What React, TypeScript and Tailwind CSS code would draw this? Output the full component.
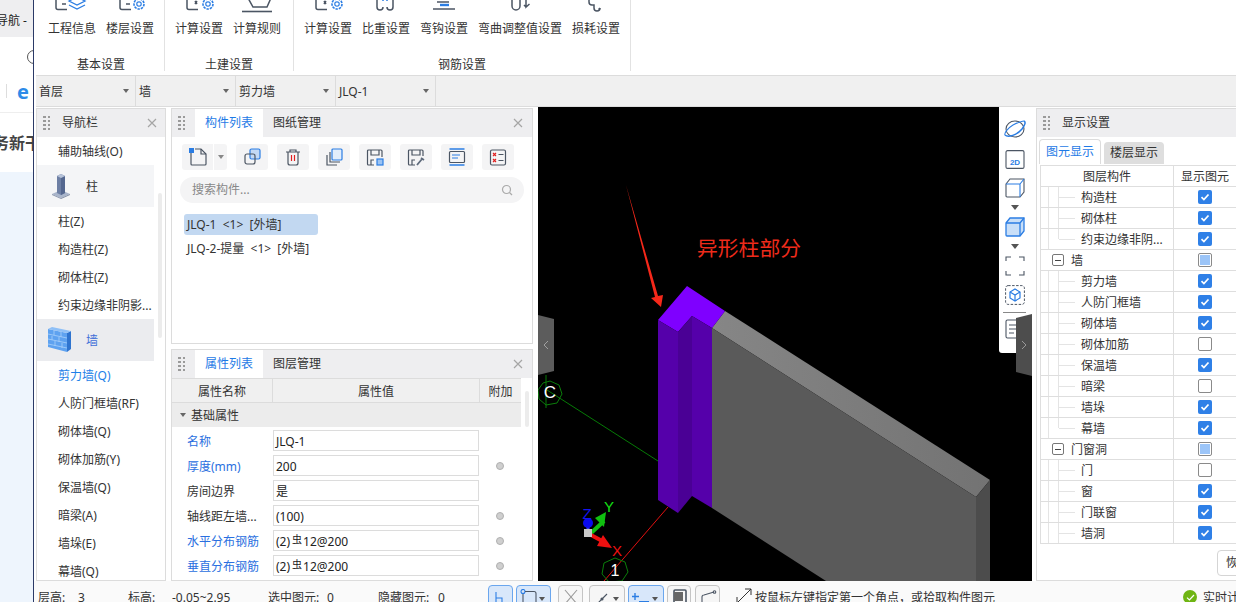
import React from "react";

const GRAY = "#4b5563";
const BLUE = "#2b7de3";

function Gear({ x, y }: { x: number; y: number }) {
  return (
    <g transform={`translate(${x} ${y})`} fill="none" stroke={BLUE}>
      <circle r="5" strokeWidth="1.6" strokeDasharray="2.4 1" />
      <circle r="2.2" strokeWidth="1.2" />
    </g>
  );
}

function DocL({ x, mark }: { x: number; mark?: boolean }) {
  return (
    <g fill="none" stroke={GRAY} strokeWidth="1.5">
      <path d={`M${x} -2V7.5a2 2 0 0 0 2 2h9`} />
      {mark ? <path d={`M${x + 8} 1l2 3M${x + 10} 1l-2 3`} /> : <path d={`M${x + 6} 4h4`} />}
    </g>
  );
}

function RibbonIcon({ kind }: { kind: number }) {
  return (
    <svg width="36" height="20" viewBox="0 0 36 20" className="block overflow-hidden">
      {kind === 0 && (
        <g>
          <DocL x={2} />
          <g fill="none" stroke={BLUE} strokeWidth="1.3">
            <path d="M15 1l8 -4 8 4-8 4z" />
            <path d="M15 5l8 4 8-4" />
          </g>
        </g>
      )}
      {kind === 1 && (
        <g>
          <DocL x={8} />
          <Gear x={27} y={4} />
        </g>
      )}
      {kind === 2 && (
        <g>
          <DocL x={6} mark />
          <Gear x={27} y={4} />
        </g>
      )}
      {kind === 3 && (
        <g fill="none" stroke={GRAY} strokeWidth="1.5">
          <path d="M9 -2l5 9h14l4-9" />
          <path d="M3 11.5h30" strokeWidth="1.6" />
        </g>
      )}
      {kind === 4 && (
        <g fill="none" stroke={GRAY} strokeWidth="1.5">
          <path d="M9 -2v9a3 3 0 0 0 6 0" />
          <path d="M25 -2v9a3 3 0 0 1-6 0" />
          <path d="M15 -2v3M19 -2v3" stroke={BLUE} />
        </g>
      )}
      {kind === 5 && (
        <g fill="none" strokeWidth="1.5">
          <path d="M7 9h22" stroke={GRAY} />
          <path d="M11 2h12" stroke={GRAY} />
          <path d="M14 5h9" stroke={BLUE} strokeWidth="2.4" />
        </g>
      )}
      {kind === 6 && (
        <g fill="none" stroke={GRAY} strokeWidth="1.5">
          <path d="M10 -2v8a4 4 0 0 0 8 0v-8" />
          <path d="M24 -2v9l3.5-3M24 7l-2-2" />
        </g>
      )}
      {kind === 7 && (
        <g fill="none" stroke={GRAY} strokeWidth="1.5">
          <path d="M11 -2v4a3 3 0 0 0 3 3h2v3a3 3 0 0 0 6 0" />
          <path d="M22 8l-1.5 1.5" />
        </g>
      )}
    </svg>
  );
}

const ribbon = [
  { title: "基本设置", cls: "w-[131px] pl-[14px]", items: [["工程信息", 0], ["楼层设置", 1]] },
  { title: "土建设置", cls: "w-[129px] pl-[10px]", items: [["计算设置", 2], ["计算规则", 3]] },
  {
    title: "钢筋设置",
    cls: "w-[337px] pl-[10px]",
    items: [["计算设置", 2], ["比重设置", 4], ["弯钩设置", 5], ["弯曲调整值设置", 6], ["损耗设置", 7]],
  },
];

function Ribbon() {
  return (
    <div className="flex h-[75px] shrink-0 bg-white">
      {ribbon.map((g) => (
        <div key={g.title} className={`flex h-[71px] shrink-0 flex-col border-r border-[#e2e2e2] ${g.cls}`}>
          <div className="flex gap-[10px]">
            {g.items.map(([label, kind], i) => (
              <div key={i} className="flex flex-col items-center">
                <RibbonIcon kind={kind as number} />
                <span className="mt-px h-[16px] whitespace-nowrap leading-[16px]">{label}</span>
              </div>
            ))}
          </div>
          <div className="mb-[-2px] mt-auto h-[16px] pr-[10px] text-center leading-[16px]">{g.title}</div>
        </div>
      ))}
    </div>
  );
}

function Selector() {
  return (
    <div className="ml-[2px] flex h-[32px] shrink-0 border-y border-[#dcdcdc] bg-[#f0f0f0]">
      {["首层", "墙", "剪力墙", "JLQ-1"].map((t) => (
        <div key={t} className="flex w-[100px] items-center justify-between border-r border-[#dcdcdc] pl-[3px] pr-[6px]">
          <span className="pt-[2px]">{t}</span>
          <span className="h-0 w-0 border-x-[3px] border-t-[4px] border-x-transparent border-t-[#666]" />
        </div>
      ))}
    </div>
  );
}

function Dots() {
  return (
    <div className="grid w-[7px] shrink-0 grid-cols-2 gap-x-[2px] gap-y-[1.5px]">
      {[0, 1, 2, 3, 4, 5, 6, 7].map((i) => (
        <span key={i} className="h-[2.5px] w-[2.5px] bg-[#9a9a9a]" />
      ))}
    </div>
  );
}

function Close() {
  return (
    <svg width="10" height="10" viewBox="0 0 10 10" className="ml-auto shrink-0">
      <path d="M1 1l8 8M9 1l-8 8" stroke="#a5a5a5" strokeWidth="1.2" />
    </svg>
  );
}

function NavRow({ t, blue }: { t: string; blue?: boolean }) {
  return <div className={`h-[28px] whitespace-nowrap pl-[21px] leading-[30px] ${blue ? "text-[#1e7fe8]" : ""}`}>{t}</div>;
}

function ColumnIcon() {
  return (
    <svg width="20" height="26" viewBox="0 0 20 26">
      <path d="M1 21l9-4 9 4-9 4z" fill="#a9b5cb" />
      <path d="M1 21l9 4v1l-9-4z" fill="#8b97ae" />
      <path d="M19 21l-9 4v1l9-4z" fill="#7f8ba3" />
      <path d="M6 3l4-2 4 2v17l-4 2-4-2z" fill="#6d7fa4" />
      <path d="M10 5l4-2v17l-4 2z" fill="#54678f" />
      <path d="M6 3l4-2 4 2-4 2z" fill="#b7c3d9" />
    </svg>
  );
}

function WallIcon() {
  return (
    <svg width="24" height="26" viewBox="0 0 24 26">
      <path d="M0 2l19 4v19L0 20z" fill="#5ea2f0" />
      <path d="M19 6l4-2v18l-4 3z" fill="#2f74cf" />
      <path d="M0 2l4-2 19 4-4 2z" fill="#8fc0f7" />
      <path d="M0 7l19 4M0 12l19 4M0 17l19 4M6 3v5M13 5v5M4 9v4M11 10v5M7 14v5M14 16v5" stroke="#a9d0fa" strokeWidth="0.8" fill="none" />
    </svg>
  );
}

function NavPanel() {
  return (
    <div className="mt-px flex w-[130px] shrink-0 flex-col overflow-hidden border border-[#dcdcdc] bg-white">
      <div className="flex h-[28px] shrink-0 items-center bg-[#eeeef0] pl-[6px] pr-[8px]">
        <Dots />
        <span className="ml-[12px]">导航栏</span>
        <Close />
      </div>
      <div className="flex min-h-0 flex-1 overflow-hidden">
        <div className="w-[117px] shrink-0">
          <NavRow t="辅助轴线(O)" />
          <div className="flex h-[42px] items-center bg-[#f4f5f7] pl-[14px]">
            <ColumnIcon />
            <span className="ml-[15px] pt-[2px]">柱</span>
          </div>
          <NavRow t="柱(Z)" />
          <NavRow t="构造柱(Z)" />
          <NavRow t="砌体柱(Z)" />
          <NavRow t="约束边缘非阴影..." />
          <div className="flex h-[42px] items-center bg-[#ebecef] pl-[11px]">
            <WallIcon />
            <span className="ml-[14px] pt-[2px] text-[#3f6fd8]">墙</span>
          </div>
          <NavRow t="剪力墙(Q)" blue />
          <NavRow t="人防门框墙(RF)" />
          <NavRow t="砌体墙(Q)" />
          <NavRow t="砌体加筋(Y)" />
          <NavRow t="保温墙(Q)" />
          <NavRow t="暗梁(A)" />
          <NavRow t="墙垛(E)" />
          <NavRow t="幕墙(Q)" />
        </div>
        <div className="ml-[4px] mt-[56px] h-[145px] w-[4px] rounded-full bg-[#ececec]" />
      </div>
    </div>
  );
}

function Tabs({ a, b }: { a: string; b: string }) {
  return (
    <div className="flex h-[28px] shrink-0 items-center bg-[#eeeef0] pl-[6px] pr-[9px]">
      <Dots />
      <span className="ml-[10px] flex h-full w-[68px] items-center justify-center bg-white text-[#1e7ae6]">{a}</span>
      <span className="ml-[10px]">{b}</span>
      <Close />
    </div>
  );
}

function ToolIcon({ kind }: { kind: number }) {
  return (
    <svg width="20" height="20" viewBox="0 0 20 20" fill="none" strokeWidth="1.2" stroke={GRAY}>
      {kind === 0 && (
        <g>
          <path d="M3 5v12a1 1 0 0 0 1 1h13a1 1 0 0 0 1-1V7l-5-5H7" />
          <path d="M13 2v5h5" />
          <path d="M1 1h5v5H1z" fill={BLUE} stroke="none" />
        </g>
      )}
      {kind === 1 && (
        <g>
          <rect x="8" y="2" width="10" height="10" rx="1.5" fill="#c3d9f5" stroke={BLUE} />
          <rect x="3" y="7" width="10" height="10" rx="2" />
        </g>
      )}
      {kind === 2 && (
        <g>
          <path d="M3 5h14M7 5V3h6v2M5 5v11a2 2 0 0 0 2 2h6a2 2 0 0 0 2-2V5" />
          <path d="M8.5 8v6M11.5 8v6" stroke="#e02020" />
        </g>
      )}
      {kind === 3 && (
        <g>
          <rect x="8" y="2" width="10" height="11" rx="1" fill="#e3eefb" stroke={BLUE} />
          <path d="M6 5v10h10M3 8v10h10" />
        </g>
      )}
      {kind === 4 && (
        <g>
          <path d="M17 10V4a1 1 0 0 0-1-1H3.5a1 1 0 0 0-1 1v13a1 1 0 0 0 1 1H9" />
          <path d="M6 3v5h8V3M6 18v-5h3" />
          <rect x="12" y="12" width="6" height="6" fill="#9cc3f2" stroke={BLUE} />
        </g>
      )}
      {kind === 5 && (
        <g>
          <path d="M17 9V4a1 1 0 0 0-1-1H3.5a1 1 0 0 0-1 1v13a1 1 0 0 0 1 1H9" />
          <path d="M6 3v5h8V3M6 18v-5h3" />
          <path d="M11 18l5-6M15 11l3 2" stroke="#5f6b7c" strokeWidth="1.8" />
        </g>
      )}
      {kind === 6 && (
        <g>
          <path d="M2.5 2h15M2.5 18h15" stroke={BLUE} strokeWidth="1.4" />
          <rect x="2.5" y="4.5" width="15" height="11" rx="1" />
          <path d="M5 8h8M5 11h6" stroke={BLUE} />
        </g>
      )}
      {kind === 7 && (
        <g>
          <rect x="2.5" y="3" width="15" height="15" rx="1.5" />
          <path d="M5 6l3 3M8 6l-3 3M5 12l3 3M8 12l-3 3" stroke="#e02020" />
          <path d="M10.5 7.5h5M10.5 13.5h5" />
        </g>
      )}
    </svg>
  );
}

function ComponentPanel() {
  return (
    <div className="mt-px flex h-[236px] shrink-0 flex-col border border-[#dcdcdc] bg-white">
      <Tabs a="构件列表" b="图纸管理" />
      <div className="ml-[10px] mt-[7px] flex h-[26px] gap-[9px]">
        <div className="flex w-[45px] overflow-hidden rounded-[3px] bg-[#f4f4f5]">
          <span className="flex w-[32px] items-center justify-center border-r border-white">
            <ToolIcon kind={0} />
          </span>
          <span className="flex flex-1 items-center justify-center">
            <span className="h-0 w-0 border-x-[3px] border-t-[4px] border-x-transparent border-t-[#888]" />
          </span>
        </div>
        {[1, 2, 3, 4, 5, 6, 7].map((k) => (
          <span key={k} className="flex w-[32px] items-center justify-center rounded-[3px] bg-[#f4f4f5]">
            <ToolIcon kind={k} />
          </span>
        ))}
      </div>
      <div className="mx-[8px] mt-[7px] flex h-[26px] items-center rounded-full bg-[#f4f4f5] pl-[12px] pr-[11px] text-[#888]">
        <span>搜索构件...</span>
        <svg width="12" height="12" viewBox="0 0 12 12" fill="none" stroke="#aaa" strokeWidth="1.2" className="ml-auto">
          <circle cx="5.5" cy="5.5" r="4" />
          <path d="M8.5 8.5l2.5 2.5" />
        </svg>
      </div>
      <div className="ml-[12px] mt-[11px] flex h-[21px] w-[134px] items-center whitespace-pre rounded-[3px] bg-[#c2d8f1] pl-[3px]">
        {"JLQ-1  <1>  [外墙]"}
      </div>
      <div className="ml-[15px] mt-[3px] h-[21px] whitespace-pre leading-[21px]">{"JLQ-2-提量  <1>  [外墙]"}</div>
    </div>
  );
}

const props: [string, string, boolean, boolean, boolean][] = [
  ["名称", "JLQ-1", true, false, false],
  ["厚度(mm)", "200", true, true, false],
  ["房间边界", "是", false, false, false],
  ["轴线距左墙...", "(100)", false, true, false],
  ["水平分布钢筋", "12@200", true, true, true],
  ["垂直分布钢筋", "12@200", true, true, true],
  ["", "", false, false, false],
];

function PropPanel() {
  return (
    <div className="mt-[5px] flex min-h-0 flex-1 flex-col overflow-hidden border border-[#dcdcdc] bg-white">
      <Tabs a="属性列表" b="图层管理" />
      <div className="flex min-h-0 flex-1 overflow-hidden">
        <div className="w-[349px] shrink-0">
          <div className="flex h-[25px] border-y border-[#dcdcdc] bg-[#f0f0f0] text-center leading-[25px]">
            <span className="w-[101px] border-r border-[#dcdcdc]">属性名称</span>
            <span className="w-[207px] border-r border-[#dcdcdc]">属性值</span>
            <span className="flex-1">附加</span>
          </div>
          <div className="flex h-[24px] items-center bg-[#ececec] pl-[8px]">
            <span className="h-0 w-0 border-x-[3px] border-t-[4px] border-x-transparent border-t-[#666]" />
            <span className="ml-[5px] pt-[2px]">基础属性</span>
          </div>
          <div className="pt-px">
            {props.map(([name, val, blue, dot, rebar], i) => (
              <div key={i} className="flex h-[25px] items-center">
                <span className={`w-[101px] shrink-0 pl-[15px] pt-[2px] ${blue ? "text-[#2a6fe0]" : ""}`}>{name}</span>
                <span className="flex h-[21px] w-[206px] shrink-0 items-center border border-[#dcdcdc] pl-[2px] pt-[2px] text-[#222]">
                  {rebar && <span>(2)</span>}
                  {rebar && <span className="ml-[2px] mr-px mt-[-5px] text-[10px] leading-[12px]">虫</span>}
                  {val}
                </span>
                {dot && <span className="ml-[17px] h-[8px] w-[8px] rounded-full border border-[#b0b0b0] bg-[#cfcfcf]" />}
              </div>
            ))}
          </div>
        </div>
        <div className="ml-[4px] mt-[13px] h-[36px] w-[4px] rounded-full bg-[#ececec]" />
      </div>
    </div>
  );
}

function Canvas() {
  return (
    <svg viewBox="538 107 494 474" className="absolute inset-0 h-full w-full" shapeRendering="geometricPrecision">
      <defs>
        <linearGradient id="top" x1="0" x2="1" y1="0" y2="0">
          <stop offset="0" stopColor="#868686" />
          <stop offset="1" stopColor="#737373" />
        </linearGradient>
      </defs>
      <path d="M547 390L658 461" stroke="#067a06" strokeWidth="1" />
      <path d="M668 507L604 581" stroke="#e01010" strokeWidth="1" />
      <path d="M546 375L546 408" stroke="#067a06" strokeWidth="1" />
      <polygon points="550,381 559,385 562,394 557,403 546,405 539,399 538,390 543,383" fill="none" stroke="#0b7d0b" />
      <text x="550" y="398" fill="#fff" fontSize="17" textAnchor="middle" fontFamily="Liberation Sans, sans-serif">C</text>
      <polygon points="712,328 725,311 990,480 976,497" fill="url(#top)" />
      <polygon points="712,328 976,497 976,581 826,581 712,508" fill="#5a5a5a" />
      <polygon points="976,497 990,480 990,581 976,581" fill="#4c4c4c" />
      <polygon points="658,320 687,286 725,311 712,328 692,316 678,332" fill="#7f00ff" />
      <polygon points="658,320 678,332 678,513 658,500" fill="#5500aa" />
      <polygon points="678,332 692,316 692,496 678,513" fill="#4a0095" />
      <polygon points="692,316 712,328 712,508 692,496" fill="#5500aa" />
      <polygon points="626,185 658,296 663,295 661,307 651,298 655,297" fill="#f5281a" />
      <text x="697" y="256" fill="#ee2b1b" fontSize="20.8" fontFamily="Noto Sans CJK SC, sans-serif">异形柱部分</text>
      <polygon points="615,558 625,562 628,572 622,581 609,582 602,574 604,563" fill="none" stroke="#0b7d0b" />
      <text x="615" y="576" fill="#fff" fontSize="16" textAnchor="middle" fontFamily="Liberation Sans, sans-serif">1</text>
      <path d="M588 532V524" stroke="#3a3aee" strokeWidth="3" />
      <circle cx="588" cy="523" r="5" fill="#0a0aee" />
      <path d="M590 534L604 521" stroke="#10c010" strokeWidth="4" />
      <polygon points="606,512 604,527 595,518" fill="#10c010" />
      <path d="M591 535L604 542" stroke="#ee1010" strokeWidth="4" />
      <polygon points="612,548 597,546 603,535" fill="#ee1010" />
      <rect x="584" y="529" width="8" height="8" fill="#c8c8c8" />
      <text x="587" y="519" fill="#1414f0" fontSize="15" textAnchor="middle" fontFamily="Liberation Sans, sans-serif">Z</text>
      <text x="609" y="512" fill="#14e014" fontSize="15" textAnchor="middle" fontFamily="Liberation Sans, sans-serif">Y</text>
      <text x="617" y="556" fill="#ee1010" fontSize="15" textAnchor="middle" fontFamily="Liberation Sans, sans-serif">X</text>
    </svg>
  );
}

function ViewTools() {
  return (
    <div className="absolute right-0 top-0 flex h-[246px] w-[33px] flex-col items-center rounded-bl-[3px] bg-white pr-[2px]">
      <svg width="24" height="22" viewBox="0 0 24 22" fill="none" className="mt-[11px]">
        <ellipse cx="12" cy="11" rx="9" ry="8" stroke={GRAY} strokeWidth="1.1" />
        <path d="M2 17c3 3 12 0 17-6 3-4 4-7 2-8" stroke={BLUE} strokeWidth="1.5" />
        <path d="M2 17c-1-2 3-7 8-10 4-2 8-4 11-4" stroke={BLUE} strokeWidth="1.1" />
      </svg>
      <svg width="20" height="19" viewBox="0 0 20 19" fill="none" className="mt-[10px]">
        <rect x="1" y="0.6" width="18" height="17.8" rx="1.5" stroke={GRAY} strokeWidth="1.1" />
        <text x="10" y="15" textAnchor="middle" fontSize="8" fontWeight="700" fill={BLUE} fontFamily="Liberation Sans, sans-serif">2D</text>
      </svg>
      <svg width="20" height="20" viewBox="0 0 20 20" fill="none" stroke={GRAY} strokeWidth="1.1" className="mt-[9px]">
        <path d="M1 6l4-5h14v13l-4 5H2a1 1 0 0 1-1-1z" />
        <path d="M1 6h14v13M15 6l4-5" stroke={BLUE} />
      </svg>
      <span className="mt-[7px] h-0 w-0 border-x-[4px] border-t-[5px] border-x-transparent border-t-[#555]" />
      <svg width="20" height="20" viewBox="0 0 20 20" fill="#c9dff8" stroke={BLUE} strokeWidth="1.3" className="mt-[7px]">
        <path d="M1 6l4-5h14v13l-4 5H2a1 1 0 0 1-1-1z" />
        <path d="M1 6h14v13M15 6l4-5" fill="none" />
      </svg>
      <span className="mt-[7px] h-0 w-0 border-x-[4px] border-t-[5px] border-x-transparent border-t-[#555]" />
      <svg width="20" height="20" viewBox="0 0 20 20" fill="none" stroke={GRAY} strokeWidth="1.1" className="mt-[7px]">
        <path d="M1 5V1h5M14 1h5v4M19 15v4h-5M6 19H1v-4" />
      </svg>
      <svg width="20" height="20" viewBox="0 0 20 20" fill="none" className="mt-[9px]">
        <rect x="0.6" y="0.6" width="18.8" height="18.8" rx="2.5" stroke={GRAY} strokeDasharray="2.5 1.5" />
        <path d="M10 4l5 3v6l-5 3-5-3V7z" stroke={BLUE} strokeWidth="1.2" />
        <path d="M5 7l5 3 5-3M10 10v6" stroke={BLUE} strokeWidth="1.2" />
      </svg>
      <span className="mt-[7px] h-px w-[23px] bg-[#888]" />
      <svg width="20" height="20" viewBox="0 0 20 20" fill="none" stroke={GRAY} strokeWidth="1.1" className="mt-[6px]">
        <rect x="1" y="1" width="18" height="18" rx="1.5" />
        <path d="M4 6h9M4 10h7M4 14h5" />
      </svg>
    </div>
  );
}

function Check({ s }: { s: "on" | "off" | "mid" }) {
  if (s === "on")
    return (
      <span className="flex h-[14px] w-[14px] items-center justify-center rounded-[2px] bg-[#2f80e7]">
        <svg width="10" height="10" viewBox="0 0 10 10" fill="none" stroke="#fff" strokeWidth="1.7">
          <path d="M1.5 5.2l2.4 2.3 4.6-5" />
        </svg>
      </span>
    );
  if (s === "mid")
    return (
      <span className="flex h-[14px] w-[14px] items-center justify-center rounded-[2px] border border-[#8a8a8a] bg-white">
        <span className="h-[10px] w-[10px] bg-[#9cc5f8]" />
      </span>
    );
  return <span className="h-[14px] w-[14px] rounded-[2px] border border-[#8a8a8a] bg-white" />;
}

const layers: [string, "on" | "off" | "mid", "child" | "last" | "parent"][] = [
  ["构造柱", "on", "child"],
  ["砌体柱", "on", "child"],
  ["约束边缘非阴...", "on", "last"],
  ["墙", "mid", "parent"],
  ["剪力墙", "on", "child"],
  ["人防门框墙", "on", "child"],
  ["砌体墙", "on", "child"],
  ["砌体加筋", "off", "child"],
  ["保温墙", "on", "child"],
  ["暗梁", "off", "child"],
  ["墙垛", "on", "child"],
  ["幕墙", "on", "last"],
  ["门窗洞", "mid", "parent"],
  ["门", "off", "child"],
  ["窗", "on", "child"],
  ["门联窗", "on", "child"],
  ["墙洞", "on", "child"],
];

function LayerRow({ name, s, type }: { name: string; s: "on" | "off" | "mid"; type: "child" | "last" | "parent" }) {
  return (
    <div className="flex h-[21px] border-b border-[#dedede]">
      <div className="flex w-[133px] shrink-0 items-center border-r border-[#dedede]">
        {type === "parent" ? (
          <>
            <span className="ml-[11px] flex h-[12px] w-[12px] items-center justify-center rounded-[2px] border border-[#777]">
              <span className="h-px w-[6px] bg-[#444]" />
            </span>
            <span className="ml-[7px] pt-[2px]">{name}</span>
          </>
        ) : (
          <>
            <span className="h-full w-[8px] border-r border-[#e4e4e4]" />
            <span className={`w-[10px] self-start border-r border-[#e4e4e4] ${type === "last" ? "h-1/2" : "h-full"}`} />
            <span className="h-px w-[16px] bg-[#e4e4e4]" />
            <span className="ml-[6px] whitespace-nowrap pt-[2px]">{name}</span>
          </>
        )}
      </div>
      <div className="flex w-[62px] shrink-0 items-center justify-center">
        <Check s={s} />
      </div>
    </div>
  );
}

function DisplayPanel() {
  return (
    <div className="mt-px flex w-[204px] shrink-0 flex-col overflow-hidden border border-[#dcdcdc] bg-white">
      <div className="flex h-[28px] shrink-0 items-center bg-[#eeeef0] pl-[6px]">
        <Dots />
        <span className="ml-[12px]">显示设置</span>
      </div>
      <div className="ml-[2px] mt-[2px] flex h-[25px] items-end gap-[3px]">
        <span className="flex h-[25px] w-[62px] items-center justify-center rounded-t-[4px] border border-b-0 border-[#dcdcdc] text-[#1e7ae6]">
          图元显示
        </span>
        <span className="flex h-[22px] w-[60px] items-center justify-center rounded-t-[4px] bg-[#dedede]">楼层显示</span>
      </div>
      <div className="ml-[3px] mt-px w-[198px] border-l border-t border-[#dedede]">
        <div className="flex h-[21px] border-b border-[#dedede] leading-[22px]">
          <span className="w-[133px] shrink-0 border-r border-[#dedede] text-center">图层构件</span>
          <span className="w-[62px] shrink-0 text-center">显示图元</span>
        </div>
        {layers.map(([n, s, t]) => (
          <LayerRow key={n} name={n} s={s} type={t} />
        ))}
      </div>
      <div className="ml-[180px] mt-[6px] flex h-[26px] w-[40px] items-center rounded-[4px] border border-[#d5d5d5] pl-[8px]">
        恢复
      </div>
    </div>
  );
}

function SBtn({ w, blue, kind, drop }: { w: string; blue?: boolean; kind: number; drop?: boolean }) {
  return (
    <span
      className={`flex h-[24px] shrink-0 items-start overflow-hidden rounded-t-[4px] border pl-[3px] pt-[3px] ${w} ${
        blue ? "border-[#6aa6ee] bg-[#d8e7fa]" : "border-[#c4c4c4] bg-[#f6f6f6]"
      }`}
    >
      <svg width="18" height="18" viewBox="0 0 18 18" fill="none" stroke={GRAY} strokeWidth="1.1" className="shrink-0">
        {kind === 0 && <path d="M4 3v13M4 9h6v7" stroke={BLUE} />}
        {kind === 1 && (
          <g>
            <circle cx="3" cy="2.5" r="2" stroke={BLUE} />
            <path d="M5 2.5h9a2 2 0 0 1 2 2V18M3 5v13" />
          </g>
        )}
        {kind === 2 && <path d="M3 1l12 14M15 1L3 15" stroke="#9a9a9a" />}
        {kind === 3 && (
          <g>
            <path d="M4 15L14 5" />
            <circle cx="9" cy="10" r="1" fill={GRAY} />
          </g>
        )}
        {kind === 4 && (
          <g>
            <path d="M3 4v7M0 7.5h7" stroke={BLUE} strokeWidth="1.4" />
            <rect x="7" y="12" width="10" height="6" fill={BLUE} stroke="none" />
          </g>
        )}
        {kind === 5 && (
          <g>
            <rect x="3" y="1" width="12" height="14" rx="1" strokeWidth="1.6" />
            <rect x="3" y="3" width="9" height="9" fill="#666" stroke="none" />
            <path d="M12 13l5 3-5 2z" fill="#444" stroke="none" />
          </g>
        )}
        {kind === 6 && (
          <g>
            <path d="M3 18V8a2 2 0 0 1 2-2l10-3" />
            <circle cx="15.5" cy="3" r="1.3" />
            <path d="M12 13l5 3-5 2z" fill="#444" stroke="none" />
          </g>
        )}
      </svg>
      {drop && <span className="ml-auto mr-[5px] mt-[8px] h-0 w-0 border-x-[3px] border-t-[4px] border-x-transparent border-t-[#555]" />}
    </span>
  );
}

function StatusBar() {
  return (
    <div className="flex h-[21px] shrink-0 items-start overflow-hidden bg-[#fafafa] pl-[4px] leading-[16px]">
      <span className="mt-[9px] w-[40px] shrink-0">层高:</span>
      <span className="mt-[9px] w-[50px] shrink-0">3</span>
      <span className="mt-[9px] w-[44px] shrink-0">标高:</span>
      <span className="mt-[9px] w-[96px] shrink-0">-0.05~2.95</span>
      <span className="mt-[9px] w-[59px] shrink-0">选中图元:</span>
      <span className="mt-[9px] w-[51px] shrink-0">0</span>
      <span className="mt-[9px] w-[60px] shrink-0">隐藏图元:</span>
      <span className="mt-[9px] w-[50px] shrink-0">0</span>
      <div className="mt-[4px] flex w-[232px] shrink-0">
        <SBtn w="w-[25px]" blue kind={0} />
        <SBtn w="ml-[3px] w-[35px]" blue kind={1} drop />
        <SBtn w="ml-[7px] w-[25px]" kind={2} />
        <SBtn w="ml-[6px] w-[36px]" kind={3} drop />
        <SBtn w="ml-[3px] w-[36px]" blue kind={4} drop />
        <SBtn w="ml-[3px] w-[24px]" kind={5} />
        <SBtn w="ml-[4px] w-[25px]" kind={6} />
      </div>
      <svg width="18" height="16" viewBox="0 0 18 16" fill="none" stroke="#333" strokeWidth="1" className="ml-[15px] mt-[7px] shrink-0">
        <path d="M2 15L16 1M10 1h6v6M2 9v6h6" />
      </svg>
      <span className="ml-[2px] mt-[9px] w-[428px] shrink-0 whitespace-nowrap">按鼠标左键指定第一个角点，或拾取构件图元</span>
      <span className="mt-[9px] flex h-[14px] w-[14px] shrink-0 items-center justify-center rounded-full bg-[#6fb513]">
        <svg width="9" height="9" viewBox="0 0 9 9" fill="none" stroke="#fff" strokeWidth="1.2">
          <path d="M1 4.6l2.4 2.4 4.6-5" />
        </svg>
      </span>
      <span className="ml-[6px] mt-[9px] whitespace-nowrap">实时计算</span>
    </div>
  );
}

function LeftStrip() {
  return (
    <div className="flex h-full w-[34px] shrink-0 flex-col overflow-hidden border-r border-[#2b3a67] bg-white">
      <div className="flex h-[37px] shrink-0 items-center justify-end whitespace-nowrap bg-[#eeeef0] pr-[6px] pt-[4px] text-[#222]">
        网址导航 -
      </div>
      <div className="flex h-[40px] shrink-0 items-center">
        <span className="ml-[27px] h-[14px] w-[14px] shrink-0 rounded-full border border-[#555]" />
      </div>
      <div className="flex h-[35px] shrink-0 items-start pt-[4px]">
        <span className="ml-[6px] mt-[3px] h-[14px] w-px bg-[#ddd]" />
        <span className="ml-[10px] text-[20px] font-bold leading-[22px] text-[#2d8be8]">e</span>
      </div>
      <div className="flex h-[60px] shrink-0 items-center overflow-hidden border-t border-[#eee]">
        <span className="ml-[-23px] whitespace-nowrap text-[16px] font-bold text-[#444]">服务新干线</span>
      </div>
      <div className="flex-1 bg-[#eef5fd]" />
    </div>
  );
}

export default function App() {
  return (
    <div className="flex h-[602px] w-[1236px] overflow-hidden bg-white text-[12px] text-[#333] [font-family:'Noto_Sans','Noto_Sans_CJK_SC',sans-serif]">
      <LeftStrip />
      <div className="flex min-w-0 flex-1 flex-col">
        <Ribbon />
        <Selector />
        <div className="flex min-h-0 flex-1 pl-[2px]">
          <NavPanel />
          <div className="ml-[5px] flex w-[362px] shrink-0 flex-col">
            <ComponentPanel />
            <PropPanel />
          </div>
          <div className="relative ml-[5px] w-[494px] shrink-0 overflow-hidden bg-black">
            <Canvas />
            <ViewTools />
            <div className="absolute left-0 top-[208px] flex h-[60px] w-[16px] items-center justify-center bg-[#5c5c5c] [clip-path:polygon(0_0,100%_4px,100%_calc(100%-4px),0_100%)]">
              <svg width="8" height="10" viewBox="0 0 8 10" fill="none" stroke="#a0a0a0"><path d="M6 1L2 5l4 4" /></svg>
            </div>
            <div className="absolute right-0 top-[207px] flex h-[62px] w-[16px] items-center justify-center bg-[#4d4d4d] [clip-path:polygon(0_4px,100%_0,100%_100%,0_calc(100%-4px))]">
              <svg width="8" height="10" viewBox="0 0 8 10" fill="none" stroke="#999"><path d="M2 1l4 4-4 4" /></svg>
            </div>
          </div>
          <div className="ml-[4px] flex">
            <DisplayPanel />
          </div>
        </div>
        <StatusBar />
      </div>
    </div>
  );
}
